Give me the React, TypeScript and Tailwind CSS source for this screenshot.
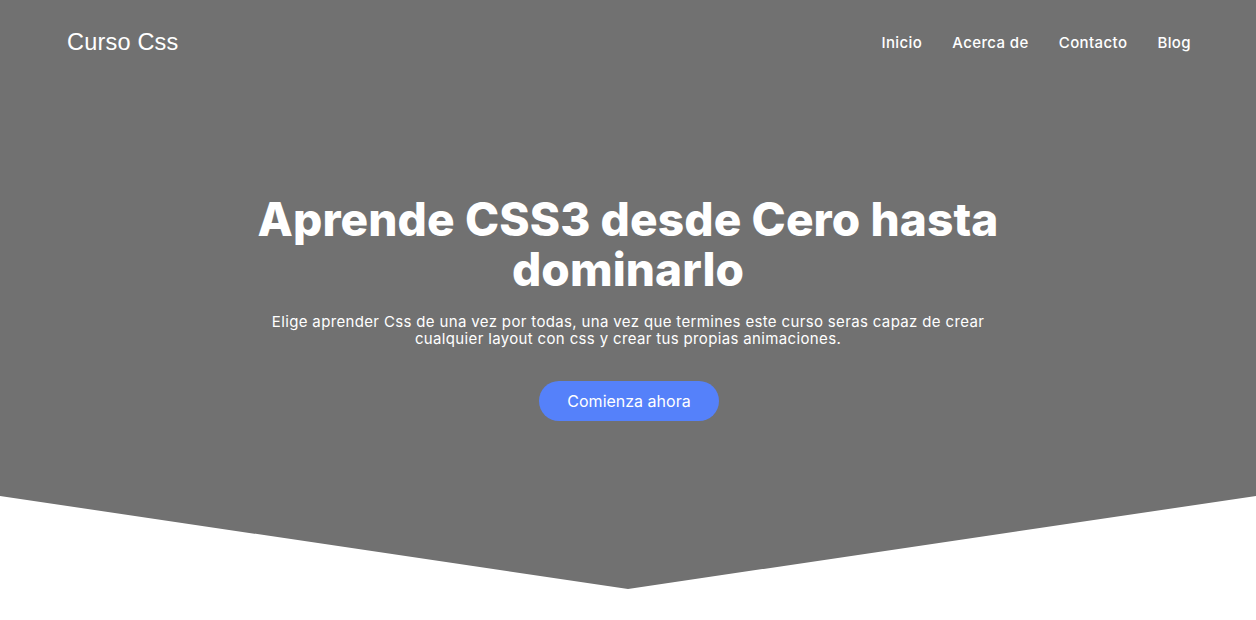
const font = { fontFamily: "Inter, 'Noto Sans', sans-serif" };

export default function App() {
  return (
    <div className="relative h-[620px] w-full overflow-hidden bg-white" style={font}>
      <header className="flex h-[620px] flex-col bg-[#717171] text-white [clip-path:polygon(0_0,100%_0,100%_80%,50%_95%,0_80%)]">
        <nav className="flex h-[86px] items-center justify-between pl-[67px] pr-[65px]">
          <a className="text-[23.5px] font-light tracking-[0.2px]" style={{ fontFamily: "'Liberation Sans', Arial, sans-serif" }}>
            Curso Css
          </a>
          <ul className="flex items-center gap-[30px] text-[15px] font-medium tracking-[0.4px]">
            <li>Inicio</li>
            <li>Acerca de</li>
            <li>Contacto</li>
            <li>Blog</li>
          </ul>
        </nav>
        <div className="flex flex-col items-center pt-[108px] text-center">
          <h1 className="w-[780px] text-[46px] leading-[50px] font-extrabold tracking-[0.1px]">
            Aprende CSS3 desde Cero hasta dominarlo
          </h1>
          <p className="mt-[19px] w-[740px] text-[15px] leading-[17px] tracking-[0.35px]">
            Elige aprender Css de una vez por todas, una vez que termines este curso seras capaz de crear cualquier layout con css y crear tus propias animaciones.
          </p>
          <a className="mt-[34px] ml-[2px] flex h-[40px] w-[180px] items-center justify-center rounded-full bg-[#5581fa] text-[16px]">
            Comienza ahora
          </a>
        </div>
      </header>
    </div>
  );
}
